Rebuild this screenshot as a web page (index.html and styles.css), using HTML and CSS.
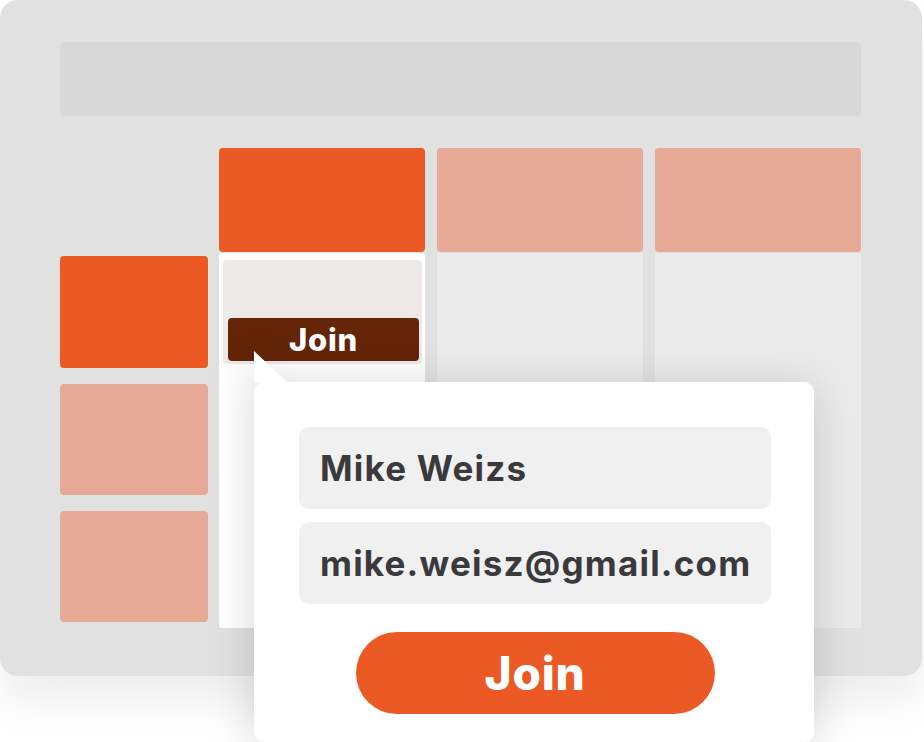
FILE: index.html
```html
<!doctype html>
<html lang="en-US">
  <head>
    <meta charset="utf-8" />
    <title>Join the board</title>
    <meta name="viewport" content="width=device-width, initial-scale=1" />
    <link rel="stylesheet" href="styles.css">
  </head>
  <body>
    <div id="stage">
      <div class="board">
        <div class="topbar"></div>
        <div class="lanes">
          <div class="lane lane-side">
            <div class="tile tile-hot"></div>
            <div class="tile"></div>
            <div class="tile"></div>
          </div>
          <div class="lane">
            <div class="lane-head lane-head-hot"></div>
            <div class="lane-body lane-body-open">
              <div class="slot">
                <div class="slot-join">Join</div>
              </div>
            </div>
          </div>
          <div class="lane">
            <div class="lane-head"></div>
            <div class="lane-body"></div>
          </div>
          <div class="lane">
            <div class="lane-head"></div>
            <div class="lane-body"></div>
          </div>
        </div>
      </div>

      <form class="popup">
        <div class="field">Mike Weizs</div>
        <div class="field">mike.weisz@gmail.com</div>
        <button type="button">Join</button>
      </form>
    </div>
  </body>
</html>
```

FILE: styles.css
```css
* {
  box-sizing: border-box;
  margin: 0;
  padding: 0;
  font-family: Inter, "Open Sans", "Liberation Sans", sans-serif;
}

body {
  background: #fff;
  width: 924px;
  height: 742px;
  overflow: hidden;
}

#stage {
  position: relative;
  width: 924px;
  height: 742px;
}

.board {
  width: 922px;
  height: 676px;
  background: #e1e1e1;
  border-radius: 18px;
  padding: 42px 61px 0 60px;
  box-shadow: 0 26px 44px rgba(0, 0, 0, 0.07);
}

.topbar {
  height: 74px;
  background: #d8d8d8;
  border-radius: 5px;
}

.lanes {
  display: grid;
  grid-template-columns: 147px 206px 206px 206px;
  column-gap: 12px;
  margin-top: 32px;
}

.lane {
  display: flex;
  flex-direction: column;
  gap: 1px;
}

.lane-side {
  width: 148px;
  padding-top: 108px;
  gap: 16px;
}

.tile {
  height: 111px;
  background: #e7aa96;
  border-radius: 4px;
}

.tile-hot {
  height: 112px;
  background: #eb5a24;
}

.lane-head {
  height: 104px;
  background: #e7aa96;
  border-radius: 4px;
}

.lane-head-hot {
  background: #eb5a24;
}

.lane-body {
  height: 375px;
  background: #ebebeb;
  border-radius: 3px;
}

.lane-body-open {
  background: #fff;
  padding: 7px 3px 0 4px;
}

.slot {
  height: 104px;
  background: #ece9e8;
  border-radius: 4px;
  padding: 58px 3px 0 5px;
}

.slot-join {
  height: 43px;
  background: #642508;
  border-radius: 4px;
  color: #fff;
  font-size: 31px;
  font-weight: 800;
  letter-spacing: 0.8px;
  text-align: center;
  line-height: 43px;
}

.popup {
  position: absolute;
  left: 254px;
  top: 382px;
  width: 560px;
  height: 360px;
  background: #fff;
  border-radius: 10px;
  padding: 45px 43px 0 45px;
  display: flex;
  flex-direction: column;
  gap: 13px;
  filter: drop-shadow(0 6px 22px rgba(0, 0, 0, 0.16));
}

.popup::before {
  content: "";
  position: absolute;
  left: 0;
  top: -31px;
  width: 34px;
  height: 32px;
  background: #fff;
  clip-path: polygon(0 0, 100% 100%, 0 100%);
}

.field {
  height: 82px;
  background: #f0f0f0;
  border-radius: 10px;
  padding: 0 21px;
  color: #3a3a3d;
  font-size: 35px;
  font-weight: 700;
  letter-spacing: 1.2px;
  line-height: 82px;
  white-space: nowrap;
}

.popup button {
  align-self: center;
  margin-top: 15px;
  width: 359px;
  height: 82px;
  border: 0;
  border-radius: 41px;
  background: #eb5a24;
  color: #fff;
  font-size: 46px;
  font-weight: 800;
  letter-spacing: 0.8px;
  appearance: none;
  cursor: pointer;
}
```
